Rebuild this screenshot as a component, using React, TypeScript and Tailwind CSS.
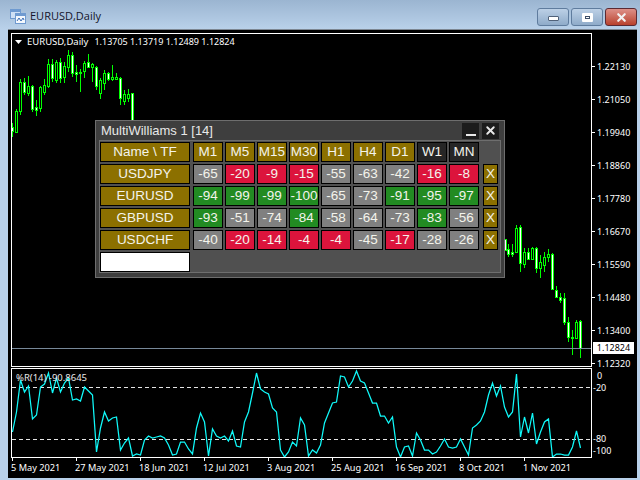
import { X } from "lucide-react";

// [x, wickTop, wickBottom, bodyTop, bodyBottom, white body?]
type Candle = [number, number, number, number, number, boolean];

const candles: Candle[] = [
  [12, 123, 137, 127, 131, true],
  [16, 109, 133, 111, 132, false],
  [20, 79, 115, 82, 111, false],
  [24, 78, 95, 82, 92, true],
  [28, 76, 96, 86, 93, false],
  [32, 85, 112, 86, 109, true],
  [36, 100, 116, 107, 110, true],
  [40, 86, 112, 87, 108, false],
  [44, 79, 95, 85, 92, false],
  [48, 59, 88, 64, 86, false],
  [52, 59, 82, 64, 78, true],
  [56, 60, 83, 62, 80, false],
  [60, 58, 83, 62, 78, true],
  [64, 62, 83, 66, 77, false],
  [68, 50, 72, 55, 67, false],
  [72, 52, 77, 55, 73, true],
  [76, 65, 82, 72, 74, true],
  [80, 69, 92, 72, 73, true],
  [84, 61, 78, 63, 71, false],
  [88, 54, 68, 62, 67, true],
  [92, 63, 82, 64, 67, false],
  [96, 66, 90, 67, 86, true],
  [100, 78, 99, 80, 93, false],
  [104, 70, 90, 73, 83, false],
  [108, 72, 81, 73, 79, true],
  [112, 65, 81, 77, 79, false],
  [116, 73, 79, 77, 79, false],
  [120, 77, 105, 78, 98, true],
  [124, 90, 105, 94, 101, false],
  [128, 89, 102, 94, 98, false],
  [132, 93, 130, 93, 130, true],
  [505, 239, 250, 239, 250, true],
  [508, 244, 257, 249, 254, true],
  [512, 244, 257, 252, 254, true],
  [516, 225, 253, 228, 252, false],
  [520, 225, 272, 227, 263, true],
  [524, 248, 268, 252, 264, false],
  [528, 248, 260, 252, 259, true],
  [532, 247, 260, 248, 259, false],
  [536, 247, 273, 248, 268, true],
  [540, 255, 278, 262, 268, false],
  [544, 252, 272, 257, 265, false],
  [548, 249, 262, 254, 257, false],
  [552, 253, 290, 254, 289, true],
  [556, 286, 298, 290, 297, true],
  [560, 293, 303, 297, 300, true],
  [564, 293, 325, 298, 322, true],
  [568, 317, 342, 322, 337, true],
  [572, 330, 355, 337, 338, true],
  [576, 320, 339, 322, 338, false],
  [580, 320, 358, 321, 348, true],
];

const osc = [
  432, 412, 380, 392, 386, 419, 415, 387, 384, 373, 393, 378, 392, 383, 378, 400, 399, 401, 387, 391, 395,
  452, 428, 412, 421, 418, 417, 450, 443, 438, 456, 454, 455, 440, 436, 438, 437, 436, 438, 445, 455, 454,
  442, 442, 449, 454, 428, 413, 422, 456, 429, 436, 438, 436, 441, 431, 446, 447, 422, 412, 393, 373, 389, 392,
  394, 408, 412, 450, 457, 452, 442, 446, 418, 425, 456, 450, 453, 445, 423, 413, 403, 402, 376, 377, 387,
  381, 371, 381, 383, 393, 403, 403, 416, 416, 423, 417, 447, 457, 447, 446, 456, 433, 440, 450, 450, 454, 452,
  446, 439, 447, 448, 447, 439, 447, 455, 428, 425, 421, 412, 395, 383, 396, 386, 407, 417, 412, 374, 437, 417,
  433, 413, 444, 432, 422, 419, 457, 454, 454, 455, 455, 447, 431, 448,
];

const prices = ["1.22130", "1.21050", "1.19940", "1.18860", "1.17780", "1.16670", "1.15590", "1.14480", "1.13400", "1.12320"];
const dates = ["5 May 2021", "27 May 2021", "18 Jun 2021", "12 Jul 2021", "3 Aug 2021", "25 Aug 2021", "16 Sep 2021", "8 Oct 2021", "1 Nov 2021"];
const timeframes = ["M1", "M5", "M15", "M30", "H1", "H4", "D1", "W1", "MN"];

const rows: { name: string; values: number[] }[] = [
  { name: "USDJPY", values: [-65, -20, -9, -15, -55, -63, -42, -16, -8] },
  { name: "EURUSD", values: [-94, -99, -99, -100, -65, -73, -91, -95, -97] },
  { name: "GBPUSD", values: [-93, -51, -74, -84, -58, -64, -73, -83, -56] },
  { name: "USDCHF", values: [-40, -20, -14, -4, -4, -45, -17, -28, -26] },
];

function valueColor(v: number) {
  if (v <= -80) return "bg-[#228b22]";
  if (v >= -20) return "bg-[#dc143c]";
  return "bg-[#808080]";
}

function Candles() {
  return (
    <svg className="absolute inset-0" width="579" height="332" viewBox="12 34 579 332" shapeRendering="crispEdges">
      {candles.map(([x, wt, wb, bt, bb, white]) => (
        <g key={x}>
          <rect x={x} y={wt} width="1" height={wb - wt} fill="#00ff00" />
          <rect x={x - 1} y={bt} width="3" height={bb - bt + 1} fill="#00ff00" />
          {bb - bt > 1 && <rect x={x} y={bt + 1} width="1" height={bb - bt - 1} fill={white ? "#ffffff" : "#000000"} />}
        </g>
      ))}
      <rect x="12" y="348" width="579" height="1" fill="#778899" />
    </svg>
  );
}

function Oscillator() {
  const points = osc.map((y, i) => `${12.5 + i * 4},${y}`).join(" ");
  return (
    <svg className="absolute inset-0" width="579" height="88" viewBox="12 369 579 88">
      <line x1="12" x2="591" y1="387.5" y2="387.5" stroke="#e4e4e4" strokeDasharray="4 3" />
      <line x1="12" x2="591" y1="439.5" y2="439.5" stroke="#e4e4e4" strokeDasharray="4 3" />
      <polyline points={points} fill="none" stroke="#10fafa" strokeWidth="1.25" />
    </svg>
  );
}

function WindowIcon() {
  return (
    <svg width="16" height="15" viewBox="0 0 16 15" className="mr-[4px]">
      <rect x="0.5" y="0.5" width="10" height="9" fill="#cfe0f5" stroke="#6f9ad0" />
      <rect x="0.5" y="0.5" width="10" height="2.5" fill="#6f9ad0" />
      <rect x="5.5" y="4.5" width="10" height="10" fill="#f4f8fd" stroke="#6f9ad0" />
      <rect x="5.5" y="4.5" width="10" height="2.5" fill="#6f9ad0" />
      <path d="M7 12 L9 9 L11 12 L13 9 L14 11" fill="none" stroke="#3a6db5" />
    </svg>
  );
}

function TitleBar() {
  return (
    <div className="flex h-[29px] shrink-0 items-center bg-gradient-to-b from-[#9bb5d1] to-[#b9d1ea] pl-[10px] pr-[3px] pt-[3px]">
      <WindowIcon />
      <span className="text-[11px] text-[#14142b] [font-family:'Open_Sans',sans-serif]">EURUSD,Daily</span>
      <div className="ml-auto flex gap-[2px] self-start pt-[5px]">
        <div className="flex h-[18px] w-[32px] items-end justify-center rounded-[3px] border border-[#5f7c9e] bg-gradient-to-b from-[#bcd0e6] to-[#8fabc9] pb-[4px]">
          <div className="h-[5px] w-[11px] rounded-[1px] border border-[#50627a] bg-white" />
        </div>
        <div className="flex h-[18px] w-[32px] items-center justify-center rounded-[3px] border border-[#5f7c9e] bg-gradient-to-b from-[#bcd0e6] to-[#8fabc9]">
          <div className="flex h-[9px] w-[11px] items-center justify-center rounded-[1px] bg-white">
            <div className="h-[3px] w-[5px] border border-[#3c4d66]" />
          </div>
        </div>
        <div className="flex h-[18px] w-[32px] items-center justify-center rounded-[3px] border border-[#5b2a33] bg-gradient-to-b from-[#dd9088] to-[#b8402c]">
          <X size={13} strokeWidth={4} className="text-[#f2f2f2]" />
        </div>
      </div>
    </div>
  );
}

function Cell({ className, children }: { className: string; children?: React.ReactNode }) {
  return (
    <div className={`flex h-[20px] items-center justify-center border border-black text-[13.5px] text-[#f4f4ec] ${className}`}>
      {children}
    </div>
  );
}

function Panel() {
  return (
    <div className="absolute left-[95px] top-[120px] z-10 flex h-[158px] w-[410px] flex-col border border-[#6e6e6e] bg-[#3e3e3e] pb-[4px] pl-[3px] pr-[3px] [font-family:'Liberation_Sans',sans-serif]">
      <div className="flex h-[19px] shrink-0 items-center">
        <span className="ml-[2px] text-[13px] text-[#e8e8e8]">MultiWilliams 1 [14]</span>
        <div className="ml-auto flex gap-[3px] pr-[2px]">
          <div className="flex h-[16px] w-[17px] items-end justify-center bg-[#1c1c1c] pb-[3px]">
            <div className="h-[2px] w-[10px] bg-[#e8e8e8]" />
          </div>
          <div className="flex h-[16px] w-[17px] items-center justify-center bg-[#1c1c1c]">
            <X size={13} strokeWidth={3.5} className="text-[#e8e8e8]" />
          </div>
        </div>
      </div>
      <div className="flex flex-1 flex-col gap-[2px] border border-[#6e6e6e] bg-[#505050] pt-[1px]">
        <div className="flex gap-[2px]">
          <Cell className="mr-[1px] w-[90px] bg-[#8c7000]">Name \ TF</Cell>
          {timeframes.map((tf) => (
            <Cell key={tf} className={`w-[30px] ${tf === "W1" || tf === "MN" ? "bg-[#262626]" : "bg-[#8c7000]"}`}>
              {tf}
            </Cell>
          ))}
        </div>
        {rows.map((row) => (
          <div key={row.name} className="flex gap-[2px]">
            <Cell className="mr-[1px] w-[90px] bg-[#8c7000]">{row.name}</Cell>
            {row.values.map((v, i) => (
              <Cell key={i} className={`w-[30px] ${valueColor(v)}`}>
                {v}
              </Cell>
            ))}
            <Cell className="ml-[2px] w-[15px] bg-[#8c7000]">X</Cell>
          </div>
        ))}
        <div className="h-[20px] w-[90px] border border-black bg-white" />
      </div>
    </div>
  );
}

export default function App() {
  return (
    <div className="relative flex h-[480px] w-[640px] flex-col overflow-hidden bg-[#b9d1ea] text-[9px] text-white [font-family:'Noto_Sans',sans-serif]">
      <TitleBar />
      <div className="ml-[8px] mr-[3px] mb-[2px] flex flex-1 flex-col border-t border-[#7d8793] bg-black pl-[3px] pt-[3px]">
        <div className="flex h-[334px] shrink-0">
          <div className="relative h-[334px] w-[581px] shrink-0 border border-white">
            <Candles />
            <div className="absolute left-[3px] top-[2px] flex items-center leading-[12px]">
              <svg width="7" height="4" viewBox="0 0 7 4" className="mr-[5px]">
                <path d="M0 0 H7 L3.5 4 Z" fill="#ffffff" />
              </svg>
              <span className="text-[9.5px]">EURUSD,Daily</span>
              <span className="ml-[6px]">1.13705 1.13719 1.12489 1.12824</span>
            </div>
          </div>
          <div className="relative pt-[17px]">
            {prices.map((p) => (
              <div key={p} className="flex h-[33px] items-center">
                <div className="mr-[2px] h-px w-[3px] bg-white" />
                <span className="leading-[9px]">{p}</span>
              </div>
            ))}
            <div className="absolute left-[1px] top-[309px] flex h-[12px] w-[41px] items-center justify-center bg-white text-black">1.12824</div>
          </div>
        </div>
        <div className="mt-px flex h-[90px] shrink-0">
          <div className="relative h-[90px] w-[581px] shrink-0 border border-white">
            <Oscillator />
            <span className="absolute left-[4px] top-[3px] text-[9.5px] leading-[12px] text-[#e8e8e8]">%R(14) -90.8645</span>
          </div>
          <div className="flex flex-col pt-[2px] leading-[12px]">
            <span className="pl-[5px]">0</span>
            <span className="pl-[1px]">-20</span>
            <span className="mt-[39px] pl-[1px]">-80</span>
            <span className="pl-[1px]">-100</span>
          </div>
        </div>
        <div className="flex">
          {dates.map((d) => (
            <div key={d} className="w-[64px] shrink-0">
              <div className="ml-px h-[3px] w-px bg-white" />
              <div className="whitespace-nowrap text-[9.2px] leading-[14px]">{d}</div>
            </div>
          ))}
        </div>
      </div>
      <Panel />
    </div>
  );
}
